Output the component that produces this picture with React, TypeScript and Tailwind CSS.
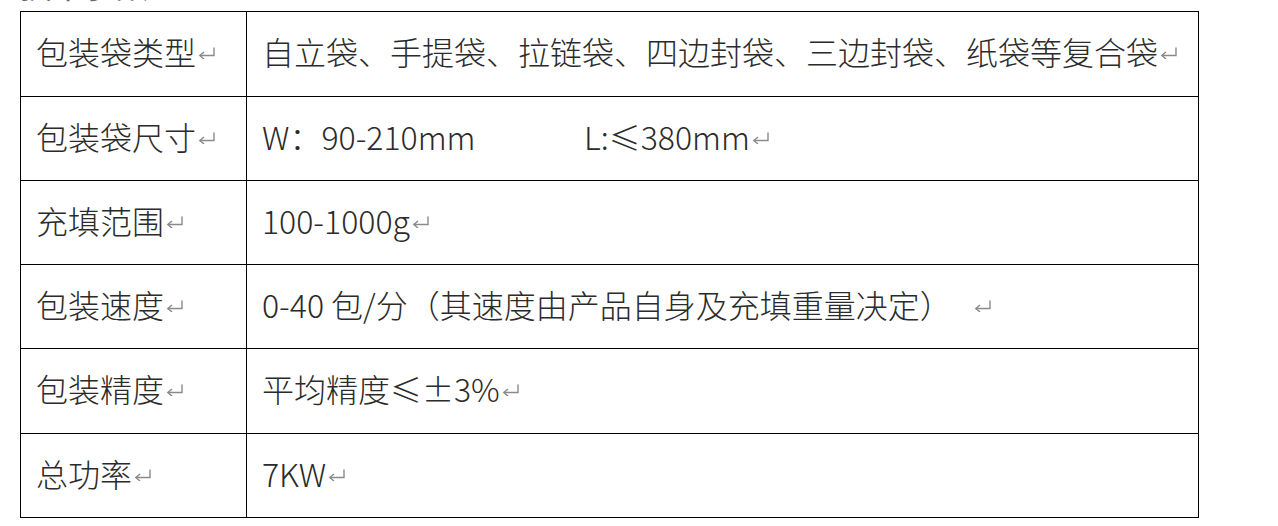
import type { ReactNode } from "react";

const font = { fontFamily: '"Noto Sans CJK SC", "Noto Sans", sans-serif' };

function ReturnMark({ gap = "ml-[2px]" }: { gap?: string }) {
    return (
        <svg
            width="18"
            height="12"
            viewBox="0 0 18 12"
            className={`${gap} shrink-0 translate-y-[2px]`}
            fill="none"
            stroke="#8a8a8a"
            strokeWidth="1.4"
        >
            <path d="M16 0.5 V8.5 H2" />
            <path d="M6 5 L1.8 8.5 L6 12" />
        </svg>
    );
}

type Row = { label: string; value: ReactNode; h: string; gap?: string };

const rows: Row[] = [
    {
        label: "包装袋类型",
        value: "自立袋、手提袋、拉链袋、四边封袋、三边封袋、纸袋等复合袋",
        h: "h-[85px]",
    },
    {
        label: "包装袋尺寸",
        value: (
            <>
                <span className="inline-block w-[322px]">W：90-210mm</span>
                <span>L:≤380mm</span>
            </>
        ),
        h: "h-[84px]",
    },
    { label: "充填范围", value: "100-1000g", h: "h-[84px]" },
    {
        label: "包装速度",
        value: "0-40 包/分（其速度由产品自身及充填重量决定）",
        h: "h-[84px]",
        gap: "ml-[22px]",
    },
    { label: "包装精度", value: "平均精度≤±3%", h: "h-[85px]" },
    { label: "总功率", value: "7KW", h: "h-[84px]" },
];

export default function App() {
    return (
        <div className="min-h-screen w-[1278px] bg-white text-[#2b2b2b]" style={font}>
            <div className="ml-[20px] h-[11px] overflow-hidden">
                <div className="-mt-[32px] text-[32px] leading-[32px] text-[#666]">技术参数</div>
            </div>
            <table className="ml-[20px] w-[1179px] border-collapse">
                <tbody>
                    {rows.map((row) => (
                        <tr key={row.label} className={row.h}>
                            <td className="w-[226px] border border-black p-0 pl-[15px]">
                                <div className="flex -translate-y-[3px] items-center whitespace-nowrap text-[32px] font-light leading-none">
                                    <span>{row.label}</span>
                                    <ReturnMark />
                                </div>
                            </td>
                            <td className="border border-black p-0 pl-[15px]">
                                <div className="flex -translate-y-[3px] items-center whitespace-nowrap text-[32px] font-light leading-none">
                                    <span>{row.value}</span>
                                    <ReturnMark gap={row.gap} />
                                </div>
                            </td>
                        </tr>
                    ))}
                </tbody>
            </table>
        </div>
    );
}
